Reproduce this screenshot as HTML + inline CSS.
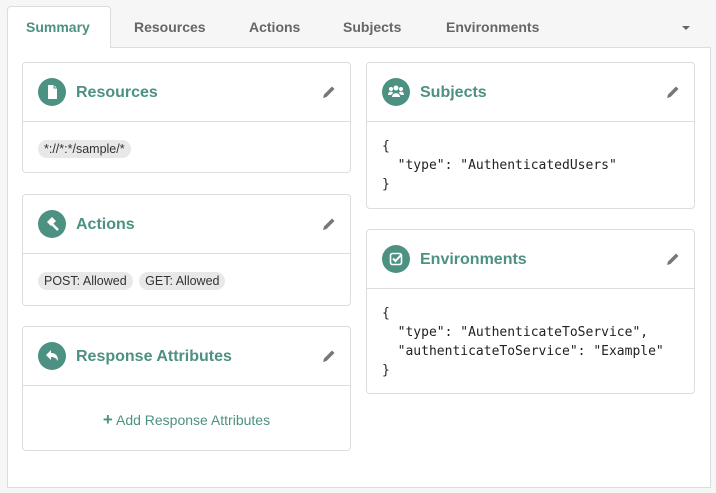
<!DOCTYPE html>
<html><head><style>
*{box-sizing:border-box;margin:0;padding:0}
body{width:716px;height:493px;background:#f6f6f6;font-family:"Liberation Sans",sans-serif;position:relative;overflow:hidden}
.tab{position:absolute;top:19px;font-size:14px;font-weight:bold;color:#666}
.active{position:absolute;left:7px;top:6px;width:104px;height:42px;background:#fff;border:1px solid #ddd;border-bottom:none;border-radius:4px 4px 0 0;z-index:2}
.content{position:absolute;left:7px;top:47px;width:704px;height:441px;background:#fff;border:1px solid #ddd}
.panel{position:absolute;background:#fff;border:1px solid #ddd;border-radius:4px}
.hd{height:59px;border-bottom:1px solid #ddd;position:relative}
.ic{position:absolute;left:15px;top:15px;width:28px;height:28px;border-radius:50%;background:#4c9181}
.ic svg{position:absolute;left:0;top:0}
.tt{position:absolute;left:53px;top:21px;font-size:16px;font-weight:bold;color:#4c9181}
.pen{position:absolute;right:14px;top:22px}
.tag{display:inline-block;background:#e8e8e8;border-radius:9px;font-size:12.5px;color:#333;padding:2px 6px;line-height:14px;margin-right:2px}
pre{font-family:"DejaVu Sans Mono","Liberation Mono",monospace;font-size:13px;line-height:19px;color:#222;position:absolute;left:15px;top:74px}
</style></head><body>
<div class="content"></div>
<div class="active"></div>
<div class="tab" style="left:26px;color:#4c9181;z-index:3">Summary</div>
<div class="tab" style="left:134px">Resources</div>
<div class="tab" style="left:249px">Actions</div>
<div class="tab" style="left:343px">Subjects</div>
<div class="tab" style="left:446px">Environments</div>
<div style="position:absolute;left:682px;top:26px;border-left:4px solid transparent;border-right:4px solid transparent;border-top:4px solid #666"></div>

<svg width="0" height="0" style="position:absolute"><defs><g id="pen"><path d="M1 13 L2 9.5 L10 1.5 L12.5 4 L4.5 12 Z" fill="#777"/></g></defs></svg>

<div class="panel" style="left:22px;top:62px;width:329px;height:111px">
 <div class="hd"><div class="ic"><svg width="28" height="28"><path d="M10 7 H16 L19 10 V21 H10 Z" fill="#fff"/><path d="M16 7 V10 H19" fill="none" stroke="#4c9181" stroke-width="1"/></svg></div><div class="tt">Resources</div><svg class="pen" width="14" height="14"><use href="#pen"/></svg></div>
 <div style="padding:18px 15px 0"><span class="tag">*://*:*/sample/*</span></div>
</div>

<div class="panel" style="left:22px;top:194px;width:329px;height:112px">
 <div class="hd"><div class="ic"><svg width="28" height="28"><path d="M9 12 L14 7 L18 11 L13 16 Z" fill="#fff"/><path d="M14 14 L20 20" stroke="#fff" stroke-width="2.5"/></svg></div><div class="tt">Actions</div><svg class="pen" width="14" height="14"><use href="#pen"/></svg></div>
 <div style="padding:18px 15px 0"><span class="tag">POST: Allowed</span> <span class="tag">GET: Allowed</span></div>
</div>

<div class="panel" style="left:22px;top:326px;width:329px;height:125px">
 <div class="hd"><div class="ic"><svg width="28" height="28"><path d="M8 13 L13 8 V11 C18 11 20 14 20 19 C18 16 16 15 13 15 V18 Z" fill="#fff"/></svg></div><div class="tt">Response Attributes</div><svg class="pen" width="14" height="14"><use href="#pen"/></svg></div>
 <div style="text-align:center;padding-top:24px;font-size:14px;color:#4c9181"><b style="font-size:17px">+</b> Add Response Attributes</div>
</div>

<div class="panel" style="left:366px;top:62px;width:329px;height:147px">
 <div class="hd"><div class="ic"><svg width="28" height="28"><circle cx="14" cy="10" r="2.5" fill="#fff"/><circle cx="9" cy="11" r="2" fill="#fff"/><circle cx="19" cy="11" r="2" fill="#fff"/><path d="M10 19 C10 14 18 14 18 19 Z M6 17 C6 13 11 13 11 15 L9 17Z M22 17 C22 13 17 13 17 15 L19 17Z" fill="#fff"/></svg></div><div class="tt">Subjects</div><svg class="pen" width="14" height="14"><use href="#pen"/></svg></div>
 <pre style="top:74px">{
  "type": "AuthenticatedUsers"
}</pre>
</div>

<div class="panel" style="left:366px;top:229px;width:329px;height:165px">
 <div class="hd"><div class="ic"><svg width="28" height="28"><rect x="8.5" y="8.5" width="11" height="11" rx="2" fill="none" stroke="#fff" stroke-width="1.6"/><path d="M11 13.5 L13.5 16 L19 10" fill="none" stroke="#fff" stroke-width="2"/></svg></div><div class="tt">Environments</div><svg class="pen" width="14" height="14"><use href="#pen"/></svg></div>
 <pre style="top:74px">{
  "type": "AuthenticateToService",
  "authenticateToService": "Example"
}</pre>
</div>
</body></html>
